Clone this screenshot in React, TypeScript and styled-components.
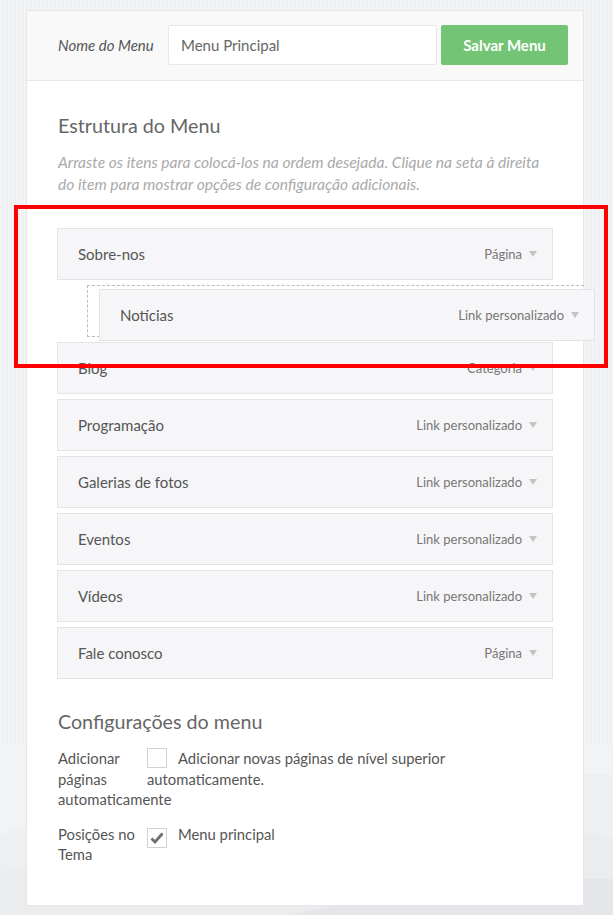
import React from "react";
import styled, { createGlobalStyle } from "styled-components";

const GlobalStyle = createGlobalStyle`
  html, body { margin: 0; padding: 0; }
  body {
    font-family: Lato, "Open Sans", Arial, sans-serif;
    background-color: #f0f1f3;
    background-image:
      repeating-linear-gradient(90deg, rgba(255,255,255,0.35) 0 1px, transparent 1px 4px);
    min-height: 915px;
  }
`;

const Page = styled.div`
  position: relative;
  padding: 10px 29px 10px 26px;
  min-height: 895px;
`;

const Swoosh = styled.svg`
  position: absolute;
  left: 0;
  top: 745px;
  width: 613px;
  height: 170px;
  z-index: 0;
`;

const Card = styled.div`
  position: relative;
  z-index: 1;
  width: 558px;
  box-sizing: border-box;
  background: #fff;
  border: 1px solid #e6e6e6;
`;

const Header = styled.div`
  display: flex;
  align-items: center;
  padding: 14px 15px 15px 31px;
  background: #f9f9fa;
  border-bottom: 1px solid #e8e8e8;
`;

const NameLabel = styled.label`
  width: 110px;
  font-style: italic;
  font-size: 15px;
  color: #555;
`;

const NameInput = styled.div`
  width: 269px;
  height: 40px;
  box-sizing: border-box;
  border: 1px solid #e8e8e8;
  background: #fff;
  border-radius: 2px;
  padding: 0 12px;
  display: flex;
  align-items: center;
  font-size: 15px;
  color: #666;
`;

const SaveButton = styled.button`
  margin-left: 4px;
  width: 127px;
  height: 40px;
  border: none;
  border-radius: 2px;
  background: #74c476;
  color: #fff;
  font-family: inherit;
  font-size: 15px;
  font-weight: 700;
`;

const Body = styled.div`
  padding: 0 30px 40px;
`;

const Heading = styled.h2<{ $top: number }>`
  margin: ${(p) => p.$top}px 0 0 1px;
  font-size: 19.7px;
  font-weight: 400;
  color: #666;
  line-height: 26px;
`;

const Description = styled.p`
  margin: 12px 0 0 1px;
  font-style: italic;
  font-size: 15.6px;
  line-height: 22px;
  color: #aaa;
`;

const List = styled.div`
  margin-top: 33px;
  display: flex;
  flex-direction: column;
  gap: 5px;
`;

const Item = styled.div`
  height: 52px;
  flex: none;
  box-sizing: border-box;
  border: 1px solid #e4e4e6;
  background: #f6f6f8;
  display: flex;
  align-items: center;
  justify-content: space-between;
  padding: 0 15px 0 20px;
`;

const DraggedItem = styled(Item)`
  position: absolute;
  left: 11px;
  top: 3px;
  width: 496px;
  z-index: 2;
`;

const Placeholder = styled.div`
  position: relative;
  height: 52px;
  flex: none;
  box-sizing: border-box;
  margin-left: 30px;
  margin-right: -31px;
  border: 1px dashed #bdbdbd;
  border-right: none;
`;

const ItemName = styled.span`
  font-size: 15px;
  color: #555;
`;

const ItemType = styled.span`
  display: flex;
  align-items: center;
  font-size: 13px;
  color: #777;
`;

const Arrow = styled.span`
  margin-left: 7px;
  width: 0;
  height: 0;
  border-left: 4.5px solid transparent;
  border-right: 4.5px solid transparent;
  border-top: 6px solid #c4c4c4;
`;

const SettingRow = styled.div<{ $top: number }>`
  display: grid;
  grid-template-columns: 89px 1fr;
  margin-top: ${(p) => p.$top}px;
  margin-left: 1px;
  font-size: 14.8px;
  line-height: 20.5px;
  color: #555;
`;

const SettingText = styled.div`
  padding-right: 80px;
`;

const Check = styled.span`
  display: inline-flex;
  align-items: center;
  justify-content: center;
  width: 20px;
  height: 20px;
  box-sizing: border-box;
  border: 1px solid #d2d2d2;
  background: #fff;
  vertical-align: -4px;
  margin-right: 11px;
`;

const Annotation = styled.div`
  position: absolute;
  left: 14px;
  top: 205px;
  width: 594px;
  height: 163px;
  box-sizing: border-box;
  border: 4px solid #ff0000;
  z-index: 5;
  pointer-events: none;
`;

const items: [string, string][] = [
  ["Blog", "Categoria"],
  ["Programação", "Link personalizado"],
  ["Galerias de fotos", "Link personalizado"],
  ["Eventos", "Link personalizado"],
  ["Vídeos", "Link personalizado"],
  ["Fale conosco", "Página"],
];

const Row = ({ name, type }: { name: string; type: string }) => (
  <Item>
    <ItemName>{name}</ItemName>
    <ItemType>
      {type}
      <Arrow />
    </ItemType>
  </Item>
);

export default function App() {
  return (
    <>
      <GlobalStyle />
      <Page>
        <Swoosh viewBox="0 0 613 170" preserveAspectRatio="none">
          <rect x="0" y="0" width="613" height="170" fill="#eeeff1" />
          <path d="M0 0 L613 0 L613 30 C450 18 200 20 0 90 Z" fill="#f2f3f5" />
          <path d="M0 170 L0 128 C150 92 420 68 613 92 L613 170 Z" fill="#ebecee" />
          <path d="M290 170 C420 140 520 132 613 134 L613 170 Z" fill="#e5e6e9" />
        </Swoosh>
        <Card>
          <Header>
            <NameLabel>Nome do Menu</NameLabel>
            <NameInput>Menu Principal</NameInput>
            <SaveButton>Salvar Menu</SaveButton>
          </Header>
          <Body>
            <Heading $top={32}>Estrutura do Menu</Heading>
            <Description>
              Arraste os itens para colocá-los na ordem desejada. Clique na seta à direita
              do item para mostrar opções de configuração adicionais.
            </Description>
            <List>
              <Row name="Sobre-nos" type="Página" />
              <Placeholder>
                <DraggedItem>
                  <ItemName>Notícias</ItemName>
                  <ItemType>
                    Link personalizado
                    <Arrow />
                  </ItemType>
                </DraggedItem>
              </Placeholder>
              {items.map(([n, t]) => (
                <Row key={n} name={n} type={t} />
              ))}
            </List>
            <Heading $top={30}>Configurações do menu</Heading>
            <SettingRow $top={13}>
              <div>Adicionar páginas automaticamente</div>
              <SettingText>
                <Check />
                Adicionar novas páginas de nível superior automaticamente.
              </SettingText>
            </SettingRow>
            <SettingRow $top={14}>
              <div>Posições no Tema</div>
              <SettingText>
                <Check>
                  <svg width="14" height="12" viewBox="0 0 14 12">
                    <path d="M1.5 6.5 L5 10 L12.5 1.5" fill="none" stroke="#6f6f6f" strokeWidth="2.8" />
                  </svg>
                </Check>
                Menu principal
              </SettingText>
            </SettingRow>
          </Body>
        </Card>
        <Annotation />
      </Page>
    </>
  );
}
